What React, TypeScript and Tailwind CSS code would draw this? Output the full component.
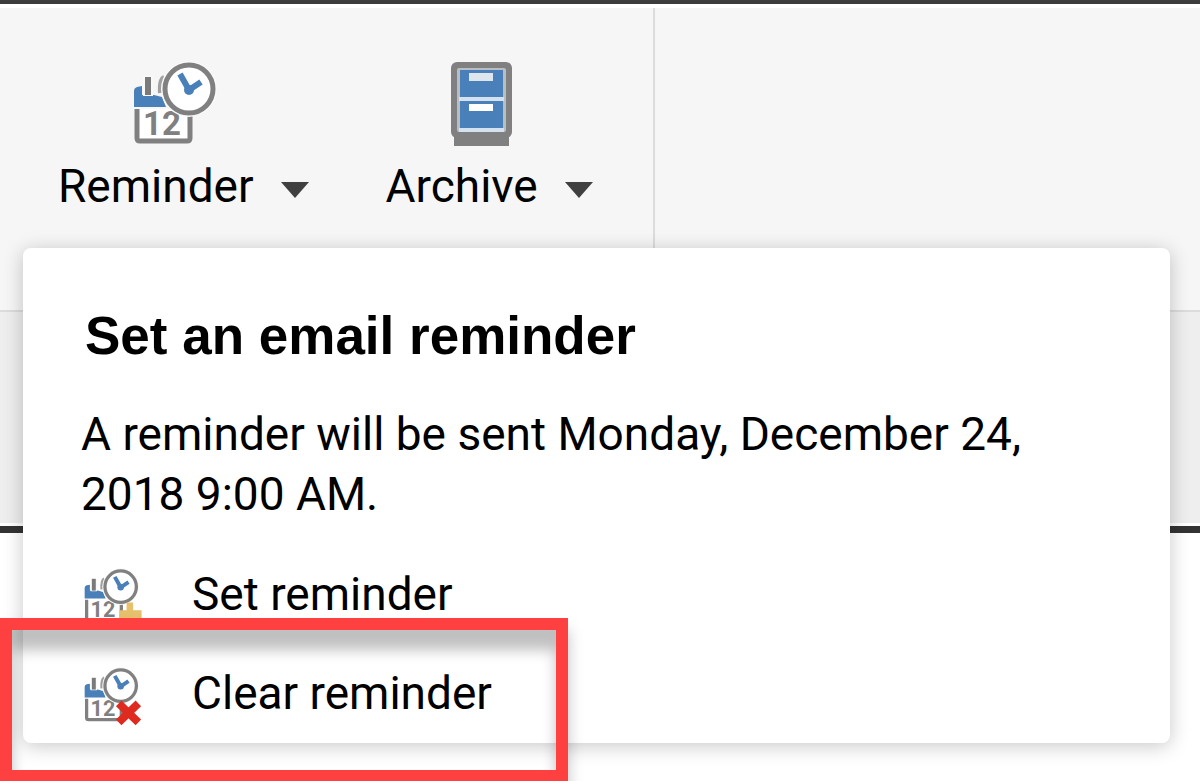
import type { ReactNode } from 'react'

interface CalendarIconProps {
  className?: string
  children?: ReactNode
}

function CalendarClockIcon({ className, children }: CalendarIconProps) {
  return (
    <svg viewBox="0 0 84 84" overflow="visible" className={className} aria-hidden="true">
      <path d="M4 47h53v32H4z" fill="#fff" />
      <path d="M4 47v29q0 3 3 3h47q3 0 3-3V50" fill="none" stroke="#808080" strokeWidth="5" />
      <path d="M1 45V29q0-3 3-4l5-1v9h12l8 2 4 10z" fill="#4a80ba" />
      <path d="M10 34V14h10v20z" fill="#f9f9f9" />
      <path d="M15 15v18" stroke="#7a7a7a" strokeWidth="6" />
      <path d="M31 15q-5 2-4 16" fill="none" stroke="#a0a0a0" strokeWidth="4" />
      <text x="10" y="73" fontSize="33" className="font-['Roboto',sans-serif] font-bold" fill="#808080">
        12
      </text>
      <circle cx="56" cy="27" r="28" fill="#f9f9f9" />
      <circle cx="56" cy="27" r="24" fill="#fff" stroke="#808080" strokeWidth="5" />
      <path d="M47 12l9 16 12-8" fill="none" stroke="#4a80ba" strokeWidth="6" />
      <circle cx="56" cy="28" r="5" fill="#4a80ba" />
      {children}
    </svg>
  )
}

function ArchiveIcon() {
  return (
    <svg viewBox="0 0 61 84" className="h-[84px] w-[61px]" aria-hidden="true">
      <rect x="3" y="68" width="55" height="16" fill="#808080" />
      <rect width="61" height="76" rx="6" fill="#808080" />
      <rect x="6" y="6" width="49" height="64" rx="2" fill="#b9bec4" />
      <rect x="9" y="8" width="43" height="58" fill="#4a80ba" />
      <path d="M8 37h45M8 68h45" stroke="#d4e2f0" strokeWidth="4" />
      <rect x="18" y="11" width="24" height="8" fill="#dfe5ec" />
      <rect x="18" y="42" width="24" height="7" fill="#fff" />
    </svg>
  )
}

function Caret() {
  return (
    <svg viewBox="0 0 28 16" className="mt-2 h-4 w-7" aria-hidden="true">
      <path d="M0 0h28L14 16z" fill="#404040" />
    </svg>
  )
}

function RibbonButton({ label, icon, expanded }: { label: string; icon: ReactNode; expanded: boolean }) {
  return (
    <button type="button" aria-haspopup="menu" aria-expanded={expanded} className="flex flex-col items-center">
      <span className="mr-4 flex h-[84px] justify-center">{icon}</span>
      <span className="mt-3 flex items-center gap-[27px] text-[46px] leading-[56px]">
        {label}
        <Caret />
      </span>
    </button>
  )
}

export default function App() {
  return (
    <div className="relative min-h-screen overflow-hidden bg-white font-['Roboto',sans-serif] text-black">
      <header className="border-t-4 border-[#3c3c3c]">
        <div className="border-t-4 border-b-2 border-t-white border-b-[#dcdcdc] bg-[#f6f6f6]">
          <div className="flex">
            <div className="flex gap-[77px] border-r-2 border-[#dcdcdc] pt-[54px] pr-[60px] pb-24 pl-[58px]">
              <RibbonButton label="Reminder" icon={<CalendarClockIcon className="size-[84px]" />} expanded />
              <RibbonButton label="Archive" icon={<ArchiveIcon />} expanded={false} />
            </div>
          </div>
        </div>
        <div className="h-[214px] border-b-[3px] border-white bg-[#eeeeee]" />
        <div className="h-[7px] bg-[#333]" />
      </header>

      {/* Reminder dropdown */}
      <section className="absolute top-[248px] right-[30px] left-[23px] rounded-lg bg-white px-[58px] pt-[58px] pb-5 shadow-[0_3px_20px_rgba(0,0,0,0.22)]">
        <h2 className="ml-1 font-['Liberation_Sans',Arial,sans-serif] text-[53px] leading-[60px] font-bold">
          Set an email reminder
        </h2>
        <p className="mt-[38px] text-[46px] leading-[60px]">
          A reminder will be sent Monday, December 24, 2018 9:00 AM.
        </p>
        <ul className="mt-10 flex flex-col gap-[39px] text-[46px] leading-[60px]">
          <li>
            <button type="button" className="flex items-center gap-[53px] pl-[3px]">
              <CalendarClockIcon className="mt-1 size-[55px]">
                <path d="M65 51h10v12h13v13H54V63h11z" fill="#e6c06c" />
              </CalendarClockIcon>
              Set reminder
            </button>
          </li>
          <li className="relative">
            <button type="button" className="flex items-center gap-[53px] pl-[3px]">
              <CalendarClockIcon className="mt-1 size-[55px]">
                <path d="M53 54l30 29M83 54L53 83" stroke="#df2a1f" strokeWidth="12" />
              </CalendarClockIcon>
              Clear reminder
            </button>
            <div className="pointer-events-none absolute -top-[45px] -left-[81px] h-[164px] w-[568px] border-[12px] border-[#ff4040] shadow-[0_12px_14px_rgba(0,0,0,0.25),inset_0_20px_14px_rgba(0,0,0,0.25)]" />
          </li>
        </ul>
      </section>
    </div>
  )
}
